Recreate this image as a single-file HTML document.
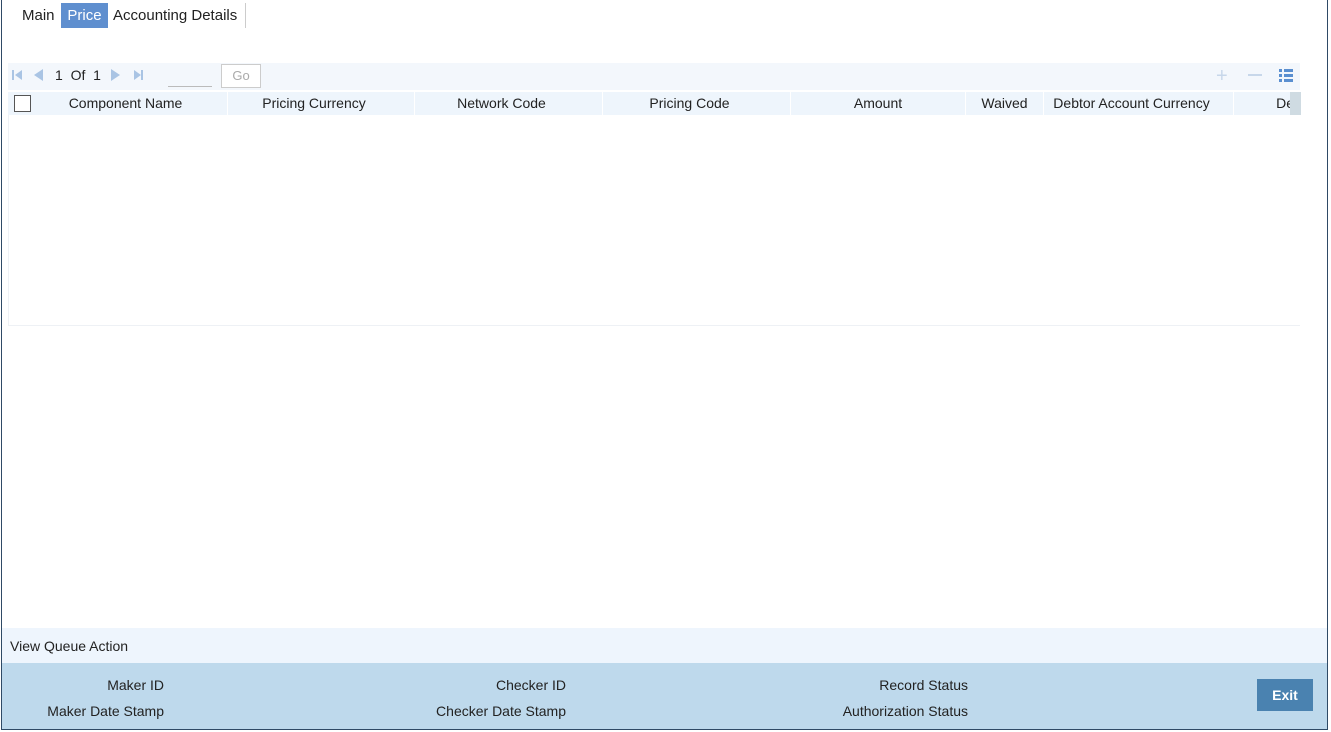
<!DOCTYPE html>
<html><head><style>
*{margin:0;padding:0;box-sizing:border-box}
body{width:1331px;height:732px;background:#fff;font-family:"Liberation Sans",sans-serif;font-size:14px;color:#222;position:relative;overflow:hidden}
.a{position:absolute}
.frame{left:1px;top:0;width:1327px;height:730px;border-left:1px solid #2f4a66;border-right:1px solid #2f4a66;border-bottom:1px solid #2f4a66}
.tab{top:3px;height:25px;line-height:25px;font-size:15px}
.h{top:92px;height:23px;line-height:23px;font-size:14px;text-align:center;border-right:1px solid #fff}
.p{padding-right:14px}
.lbl{font-size:14px;text-align:right}
</style></head><body>
<div class="a frame"></div>
<div class="a tab" style="left:22px">Main</div>
<div class="a tab" style="left:61px;width:47px;background:#5f8fcf;color:#fff;text-align:center">Price</div>
<div class="a tab" style="left:113px">Accounting Details</div>
<div class="a" style="left:245px;top:3px;width:1px;height:25px;background:#ccc"></div>

<div class="a" style="left:8px;top:63px;width:1292px;height:27px;background:#f3f7fc"></div>
<svg class="a" style="left:10px;top:68px" width="140" height="14">
<rect x="2" y="2" width="2" height="10" fill="#a9c4e4"/><path d="M12 2 L5 7 L12 12Z" fill="#a9c4e4"/>
<path d="M33 1 L24 7 L33 13Z" fill="#a9c4e4"/>
<path d="M101 1 L110 7 L101 13Z" fill="#a9c4e4"/>
<path d="M124 2 L131 7 L124 12Z" fill="#a9c4e4"/><rect x="131" y="2" width="2" height="10" fill="#a9c4e4"/>
</svg>
<div class="a" style="left:55px;top:67px;font-size:14px">1&nbsp; Of&nbsp; 1</div>
<div class="a" style="left:168px;top:86px;width:44px;height:1px;background:#bbb"></div>
<div class="a" style="left:221px;top:64px;width:40px;height:24px;border:1px solid #ccc;background:#fff;color:#aaa;font-size:13px;text-align:center;line-height:22px">Go</div>
<div class="a" style="left:1216px;top:65px;color:#c7d7ea;font-size:20px">+</div>
<div class="a" style="left:1248px;top:74px;width:14px;height:2px;background:#c7d7ea"></div>
<svg class="a" style="left:1279px;top:69px" width="14" height="13"><g fill="#5a8fd0"><rect x="0" y="0" width="3" height="3"/><rect x="5" y="0" width="9" height="3"/><rect x="0" y="5" width="3" height="3"/><rect x="5" y="5" width="9" height="3"/><rect x="0" y="10" width="3" height="3"/><rect x="5" y="10" width="9" height="3"/></g></svg>

<div class="a" style="left:8px;top:92px;width:1292px;height:234px;border-left:1px solid #eef1f5;border-bottom:1px solid #eef1f5"></div>
<div class="a" style="left:8px;top:92px;width:1292px;height:23px;background:#eef5fc"></div>
<div class="a" style="left:14px;top:95px;width:17px;height:17px;border:1px solid #555;background:#fff"></div>
<div class="a h p" style="left:38px;width:190px">Component Name</div>
<div class="a h p" style="left:228px;width:187px">Pricing Currency</div>
<div class="a h p" style="left:415px;width:188px">Network Code</div>
<div class="a h p" style="left:603px;width:188px">Pricing Code</div>
<div class="a h" style="left:791px;width:175px">Amount</div>
<div class="a h" style="left:966px;width:78px">Waived</div>
<div class="a h p" style="left:1044px;width:190px">Debtor Account Currency</div>
<div class="a h" style="left:1234px;width:60px;text-align:right;border:none;overflow:hidden">De</div>
<div class="a" style="left:1290px;top:92px;width:11px;height:23px;background:#cfdbe2"></div>

<div class="a" style="left:2px;top:628px;width:1325px;height:35px;background:#eef5fd"></div>
<div class="a" style="left:10px;top:638px">View Queue Action</div>
<div class="a" style="left:2px;top:663px;width:1325px;height:66px;background:#bed9ec"></div>
<div class="a lbl" style="right:1167px;top:677px">Maker ID</div>
<div class="a lbl" style="right:1167px;top:703px">Maker Date Stamp</div>
<div class="a lbl" style="right:765px;top:677px">Checker ID</div>
<div class="a lbl" style="right:765px;top:703px">Checker Date Stamp</div>
<div class="a lbl" style="right:363px;top:677px">Record Status</div>
<div class="a lbl" style="right:363px;top:703px">Authorization Status</div>
<div class="a" style="left:1257px;top:679px;width:56px;height:32px;background:#4a82b0;color:#fff;font-weight:bold;text-align:center;line-height:32px">Exit</div>
</body></html>
